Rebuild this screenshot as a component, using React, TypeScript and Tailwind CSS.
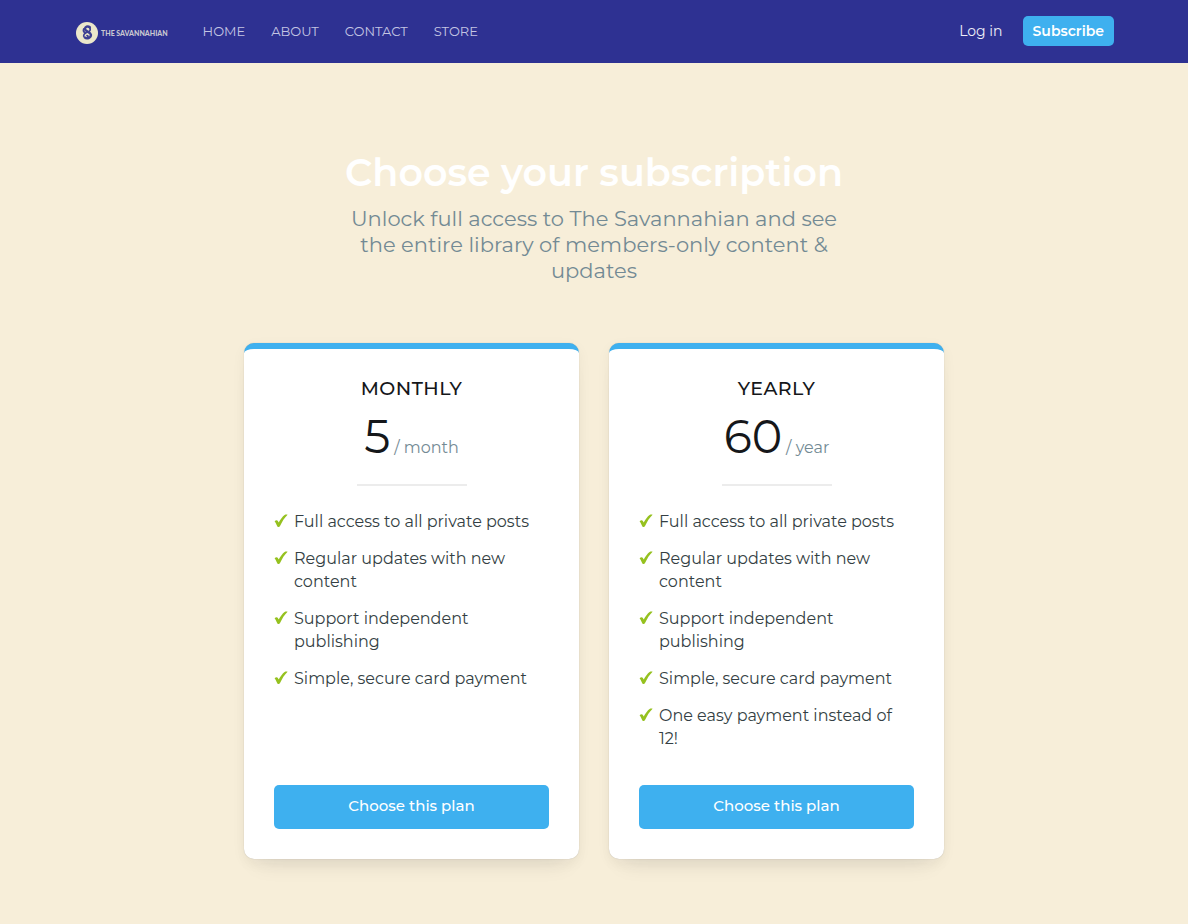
const links = ["HOME", "ABOUT", "CONTACT", "STORE"];

const perks = [
  "Full access to all private posts",
  "Regular updates with new content",
  "Support independent publishing",
  "Simple, secure card payment",
];

const plans = [
  { name: "MONTHLY", price: "5", period: "month", features: perks },
  { name: "YEARLY", price: "60", period: "year", features: [...perks, "One easy payment instead of 12!"] },
];

function Logo() {
  return (
    <a href="#" aria-label="The Savannahian" className="flex items-center gap-0.5 pl-px pt-0.5">
      <svg width="24" height="24" viewBox="0 0 24 24" aria-hidden="true">
        <circle cx="12" cy="12" r="11" fill="#ebe7cb" />
        <g fill="none" stroke="#3d4093" strokeLinecap="round">
          <path strokeWidth="2.4" d="M14.800 6.200c-2-1.500-5-.5-4.800 2 .2 2.400 5.500 2.400 5.900 5.500.3 3.400-4.200 4.600-6.200 2.700" />
          <path strokeWidth="1.700" d="M14.500 6.500c1.500 1.800.6 4-1.500 4.500-2.800.8-4.500 2-4.300 4.200M8.700 8c-.8 2 .4 3.400 2 4.200M12 14.500c1.400.2 1.500 2 .2 2.200" />
        </g>
      </svg>
      <span className="whitespace-nowrap font-['Lato',sans-serif] text-[7px] font-black leading-3 text-[#c9c8d0]">THE SAVANNAHIAN</span>
    </a>
  );
}

function Check() {
  return (
    <svg width="14" height="14" viewBox="0 0 14 14" className="mt-1 shrink-0" fill="#95c11f" aria-hidden="true">
      <path d="M.6 7.400c.9-1.200 2.500-1.500 3.300-.4l.8 1.500C6.400 5.400 8.500 2.300 10.600.9c.8-.4 2-.5 3-.2C10.400 3.800 8.200 7.400 5.900 12.300c-.5.900-2 .9-2.500.1C2.600 10.800 1.900 8.700.6 7.400z" />
    </svg>
  );
}

function PlanCard({ plan }: { plan: (typeof plans)[number] }) {
  return (
    <section className="flex flex-col rounded-[10px] border-t-[6px] border-[#3eb0ef] bg-white px-[30px] pb-[30px] pt-7 text-center shadow-[0_0_1px_rgba(0,0,0,0.25),0_16px_22px_-14px_rgba(39,44,49,0.12),0_4px_14px_rgba(39,44,49,0.05)]">
      <h2 className="text-[19px] font-medium leading-6 tracking-wide text-[#15171a]">{plan.name}</h2>
      <p className="mt-1.5 flex items-baseline justify-center gap-1">
        <span className="text-[46px] leading-[60px] text-[#15171a]">{plan.price}</span>
        <span className="text-base text-[#738a94]">/ {plan.period}</span>
      </p>
      <div className="mx-auto mt-[17px] h-0.5 w-[110px] bg-[#ececec]" />
      <ul className="mb-[35px] mt-6 flex flex-col gap-3.5 pr-2 text-left text-base leading-[23px] text-[#343f44]">
        {plan.features.map((feature) => (
          <li key={feature} className="flex gap-1.5">
            <Check />
            <span>{feature}</span>
          </li>
        ))}
      </ul>
      <button type="button" className="mt-auto h-11 rounded-[5px] bg-[#3eb0ef] pb-0.5 text-[15px] font-medium text-white">
        Choose this plan
      </button>
    </section>
  );
}

export default function App() {
  return (
    <div className="min-h-screen bg-[#f7eed9] font-['Montserrat','Inter',sans-serif]">
      <header className="bg-[#2e3192]">
        <div className="mx-auto flex h-[63px] max-w-[1040px] items-center justify-between">
          <div className="flex items-center gap-[35px]">
            <Logo />
            <nav className="flex gap-[26px] pb-0.5 text-[13px] leading-5 text-[#c4c5e3]">
              {links.map((link) => (
                <a key={link} href="#">{link}</a>
              ))}
            </nav>
          </div>
          <div className="flex items-center gap-5 pb-0.5">
            <a href="#" className="text-sm text-[#eeeef8]">Log in</a>
            <a href="#" className="flex h-[30px] items-center rounded-[5px] bg-[#3eb0ef] px-2.5 text-sm font-semibold text-white">Subscribe</a>
          </div>
        </div>
      </header>
      <main className="mx-auto max-w-[700px] pb-16 pt-[84px]">
        <div className="mx-auto max-w-[510px] text-center">
          <h1 className="text-[38px] font-semibold leading-[52px] text-white">Choose your subscription</h1>
          <p className="mt-[7px] text-[21px] leading-[26px] text-[#738a94]">
            Unlock full access to The Savannahian and see the entire library of members-only content &amp; updates
          </p>
        </div>
        <div className="mt-[59px] grid grid-cols-2 gap-[30px]">
          {plans.map((plan) => (
            <PlanCard key={plan.name} plan={plan} />
          ))}
        </div>
      </main>
    </div>
  );
}
